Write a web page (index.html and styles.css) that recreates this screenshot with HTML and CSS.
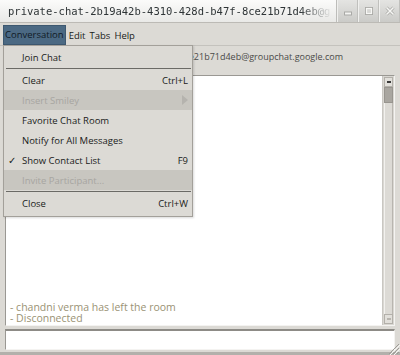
FILE: index.html
```html
<!DOCTYPE html>
<html lang="en">
<head>
    <meta charset="UTF-8">
    <title>private-chat</title>
    <link rel="stylesheet" href="styles.css">
</head>
<body>
    <div class="window">
        <!-- Barra de título -->
        <div class="titlebar">
            <div class="title">private-chat-2b19a42b-4310-428d-b47f-8ce21b71d4eb@gro</div>
            <div class="wm-buttons">
                <div class="wm-btn">
                    <svg width="10" height="10" viewBox="0 0 10 10">
                        <rect x="1.5" y="6" width="7" height="3" fill="#f4f4f2" stroke="#a9a9a6" stroke-width="1"/>
                    </svg>
                </div>
                <div class="wm-btn">
                    <svg width="10" height="10" viewBox="0 0 10 10">
                        <rect x="1.5" y="1.5" width="7" height="7" fill="none" stroke="#a9a9a6" stroke-width="1"/>
                        <rect x="2.5" y="2.5" width="5" height="5" fill="none" stroke="#f7f7f5" stroke-width="1.2"/>
                    </svg>
                </div>
                <div class="wm-btn">
                    <svg width="10" height="10" viewBox="0 0 10 10">
                        <path d="M1.5 1.5 L8.5 8.5 M8.5 1.5 L1.5 8.5" stroke="#a9a9a6" stroke-width="3"/>
                        <path d="M1.5 1.5 L8.5 8.5 M8.5 1.5 L1.5 8.5" stroke="#f7f7f5" stroke-width="1.5"/>
                    </svg>
                </div>
            </div>
        </div>

        <!-- Menú -->
        <div class="menubar">
            <span class="menubar-item active">Conversation</span>
            <span class="menubar-item">Edit</span>
            <span class="menubar-item">Tabs</span>
            <span class="menubar-item">Help</span>
        </div>

        <div class="topic">
            <span>private-chat-2b19a42b-4310-428d-b47f-8ce21b71d4eb@groupchat.google.com</span>
        </div>

        <!-- Conversación -->
        <div class="chat">
            <div class="log">
                <div class="log-line">- chandni verma has left the room</div>
                <div class="log-line">- Disconnected</div>
            </div>
            <div class="scrollbar">
                <div class="scroll-btn"><span class="scroll-mark"></span></div>
                <div class="scroll-thumb"></div>
                <div class="scroll-track"></div>
                <div class="scroll-btn"><span class="scroll-mark"></span></div>
            </div>
        </div>

        <div class="entry"></div>
        <div class="statusbar">
            <svg class="grip" width="14" height="14" viewBox="0 0 14 14">
                <path d="M13 3 L3 13 M13 7 L7 13 M13 11 L11 13" stroke="#9d9b96" stroke-width="1"/>
                <path d="M14 4 L4 14 M14 8 L8 14" stroke="#f6f5f3" stroke-width="1"/>
            </svg>
        </div>

        <!-- Menú desplegable -->
        <div class="dropdown">
            <div class="menu-row"><span>Join Chat</span></div>
            <div class="menu-sep"></div>
            <div class="menu-row"><span>Clear</span><span class="accel">Ctrl+L</span></div>
            <div class="menu-row disabled"><span>Insert Smiley</span><span class="arrow"></span></div>
            <div class="menu-row"><span>Favorite Chat Room</span></div>
            <div class="menu-row"><span>Notify for All Messages</span></div>
            <div class="menu-row"><span class="check">✓</span><span>Show Contact List</span><span class="accel">F9</span></div>
            <div class="menu-row disabled"><span>Invite Participant...</span></div>
            <div class="menu-sep"></div>
            <div class="menu-row"><span>Close</span><span class="accel">Ctrl+W</span></div>
        </div>
    </div>
</body>
</html>
```

FILE: styles.css
```css
body {
    margin: 0;
    padding: 0;
    background-color: #dcdad5;
    font-family: "Open Sans", sans-serif;
}
.window {
    position: relative;
    width: 400px;
    height: 355px;
    display: flex;
    flex-direction: column;
    background-color: #dcdad5;
    overflow: hidden;
}

/* Barra de título */
.titlebar {
    height: 22px;
    display: flex;
    background: linear-gradient(#fbfbfa, #e9e9e7);
    border-bottom: 1px solid #bcbab5;
}
.title {
    flex: 1;
    font-family: "DejaVu Sans Mono", monospace;
    font-size: 10.5px;
    line-height: 23px;
    color: #2e3436;
    padding-left: 8px;
    white-space: nowrap;
    overflow: hidden;
    -webkit-mask-image: linear-gradient(to right, #000 300px, transparent 332px);
    mask-image: linear-gradient(to right, #000 300px, transparent 332px);
}
.wm-buttons {
    display: flex;
    width: 63px;
    background: linear-gradient(#e4e4e2, #cbcbc8);
    border-left: 1px solid #bdbdba;
}
.wm-btn {
    flex: 1;
    display: flex;
    align-items: center;
    justify-content: center;
    border-left: 1px solid #f0f0ee;
    border-right: 1px solid #c0c0bd;
}

/* Barra de menú */
.menubar {
    height: 22px;
    display: flex;
    align-items: flex-end;
    padding: 0 0 0 3px;
    border-bottom: 1px solid #c4c2bd;
    font-size: 9.5px;
    color: #1a1a1a;
}
.menubar-item {
    height: 19px;
    line-height: 19px;
    padding: 0 2px;
}
.menubar-item.active {
    background-color: #4b6983;
    color: #101a26;
    border: 1px solid #3d5870;
    height: 18px;
    line-height: 18px;
    padding: 0 1px;
    margin-right: 1px;
}

.topic {
    height: 29px;
    display: flex;
    justify-content: flex-end;
    padding-right: 57px;
    overflow: hidden;
    font-size: 9px;
    line-height: 12px;
    color: #4a4a48;
    white-space: nowrap;
}
.topic span {
    padding-top: 5px;
}

/* Área de conversación */
.chat {
    height: 249px;
    margin: 0 5px;
    display: flex;
    border: 1px solid #9a9893;
    border-right-color: #f4f3f1;
    border-bottom-color: #f4f3f1;
    background-color: #ffffff;
}
.log {
    flex: 1;
    display: flex;
    flex-direction: column;
    justify-content: flex-end;
    padding: 0 0 1px 4px;
    font-size: 10.5px;
    line-height: 11px;
    color: #9a9274;
}
.scrollbar {
    width: 11px;
    display: flex;
    flex-direction: column;
    background-color: #d9d7d2;
    border-left: 1px solid #c9c7c2;
}
.scroll-btn {
    height: 8px;
    display: flex;
    align-items: center;
    justify-content: center;
    background-color: #e2e0db;
    border: 1px solid #b3b0aa;
    margin: 1px 1px 0 1px;
}
.scroll-btn:last-child {
    margin: 0 1px 1px 1px;
}
.scroll-mark {
    width: 4px;
    height: 2px;
    background-color: #3a3a3a;
}
.scroll-btn:last-child .scroll-mark {
    background-color: #b8b5af;
}
.scroll-thumb {
    height: 14px;
    margin: 0 1px;
    background-color: #a9a6a0;
    border: 1px solid #98958f;
}
.scroll-track {
    flex: 1;
    margin: 0 1px;
    background-color: #dcdad5;
    border-left: 1px solid #f2f1ee;
    border-right: 1px solid #b8b5af;
}

.entry {
    height: 18px;
    margin: 3px 5px 0 5px;
    background-color: #ffffff;
    border: 1px solid #f4f3f1;
    border-top: 2px solid #8d8b86;
    border-left-color: #9a9893;
}
.statusbar {
    flex: 1;
    position: relative;
    border-bottom: 3px solid #b2b0ab;
}
.grip {
    position: absolute;
    right: 0;
    bottom: -3px;
}

/* Menú desplegable */
.dropdown {
    position: absolute;
    left: 3px;
    top: 45px;
    width: 188px;
    padding: 1px 0 3px 0;
    background-color: #dcdad5;
    border: 1px solid #a3a09a;
    box-shadow: 1px 1px 2px rgba(0, 0, 0, 0.15);
    font-size: 9.5px;
    color: #1a1a1a;
}
.menu-row {
    position: relative;
    height: 20px;
    display: flex;
    align-items: center;
    padding: 0 4px 0 18px;
}
.menu-row.disabled {
    background-color: #c8c6c0;
    color: #a7a5a0;
}
.accel {
    margin-left: auto;
}
.check {
    position: absolute;
    left: 4px;
    font-size: 10px;
}
.arrow {
    margin-left: auto;
    width: 0;
    height: 0;
    border-top: 5px solid transparent;
    border-bottom: 5px solid transparent;
    border-left: 6px solid #b5b3ae;
}
.menu-sep {
    height: 1px;
    margin: 1px 1px 1px 2px;
    background-color: #6b6a66;
}
```
